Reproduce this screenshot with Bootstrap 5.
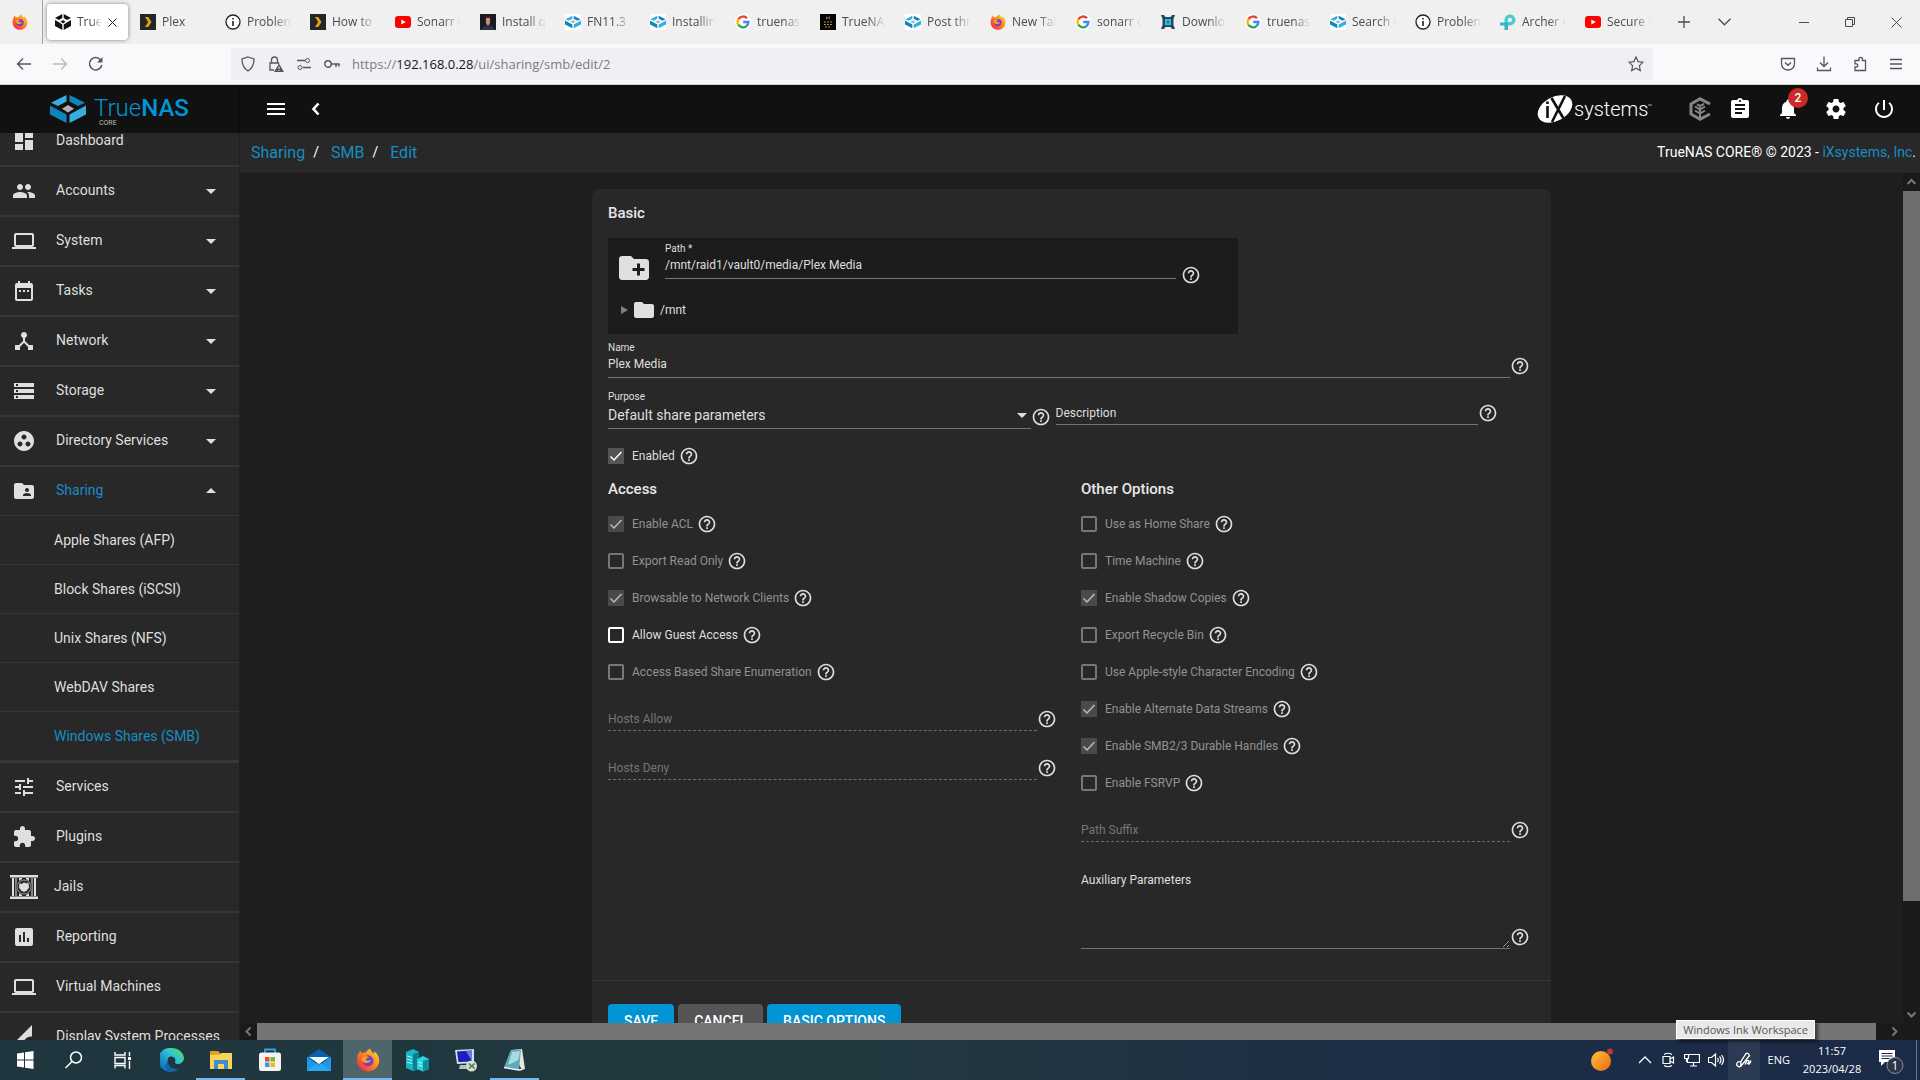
<!DOCTYPE html>
<html lang="en">
<head>
<meta charset="utf-8">
<meta name="viewport" content="width=device-width, initial-scale=1">
<title>TrueNAS - Sharing SMB Edit</title>
<link href="https://cdn.jsdelivr.net/npm/bootstrap@5.3.0/dist/css/bootstrap.min.css" rel="stylesheet">
<style>
  :root { --blue: #0095d5; --link: #1a8cc4; --fg: #dfdfdf; --bg1: #1e1e1e; --bg2: #282828; --seg: "Open Sans", "Noto Sans", sans-serif; }
  body { height: 100vh; overflow: hidden; font-family: Roboto, sans-serif; font-size: 14px; background: var(--bg1); color: var(--fg); }
  svg { display: block; flex: none; }
  a { text-decoration: none; color: inherit; }
  .plain { background: none; border: 0; padding: 0; color: inherit; display: flex; }
  .i24 { width: 24px; height: 24px; fill: currentColor; }
  .i20 { width: 20px; height: 20px; fill: currentColor; }
  .i16 { width: 16px; height: 16px; }
  .ln { fill: none; stroke: currentColor; }

  .tabstrip { height: 44px; background: #f0f0f0; color: #4a4a52; font: 12px/16px var(--seg); }
  .pinned { width: 43px; padding-left: 12px; border-right: 1px solid #a5a5a8; }
  .btab { width: 85px; padding-left: 8px; gap: 6px; flex: none; }
  .btab .ttl { width: 44px; overflow: hidden; white-space: nowrap; -webkit-mask-image: linear-gradient(90deg, #000 60%, transparent); mask-image: linear-gradient(90deg, #000 60%, transparent); }
  .btab.current { width: 81px; height: 36px; margin: 0 4px; background: #fff; border-radius: 4px; box-shadow: 0 0 4px rgba(0,0,0,.45); }
  .btab.current .ttl { width: 25px; }
  .winbtns { gap: 36px; padding-right: 18px; }
  .toolbar { height: 41px; background: #f9f9fb; border-bottom: 1px solid #cdd2cd; color: #55555e; padding: 0 16px; }
  .toolbar .grp { gap: 20px; }
  .urlbar { height: 32px; background: #f0f0f4; border-radius: 4px; padding: 0 9px; margin: 0 127px; gap: 12px; }
  .urlbar .addr { font: 13px/20px var(--seg); color: #7b7b84; }
  .urlbar .addr b { font-weight: 400; color: #15141a; }

  .apphead { height: 48px; background: #111; color: #fff; padding-right: 24px; }
  .brand { width: 240px; padding-left: 50px; gap: 8px; border-right: 1px solid #0c0c0c; }
  .brand .word { font-size: 24px; line-height: 24px; font-weight: 300; color: var(--blue); }
  .brand .word b { font-weight: 500; }
  .brand .core { font-size: 7px; line-height: 7px; color: #bbb; padding-left: 5px; }
  .headicons { gap: 24px; }
  .headicons .tight { margin-left: -8px; }
  .alerts { width: 20px; height: 20px; border-radius: 50%; background: #ce2929; color: #fff; font-size: 12px; line-height: 20px; font-weight: 500; top: -9px; left: 12px; text-align: center; }

  .workarea, .pane { min-height: 0; }
  .growcol { min-width: 0; }
  .side { width: 240px; background: var(--bg2); border-right: 1px solid #212121; overflow: hidden; }
  .side .menu { margin: -16px 0 0; padding: 0; list-style: none; flex: none; }
  .side .entry { height: 50px; border-bottom: 2px solid #373737; padding: 0 16px 0 12px; gap: 20px; }
  .side .entry.wide { padding-left: 10px; gap: 16px; }
  .side .entry .lbl { flex: 1; white-space: nowrap; padding-bottom: 1px; }
  .side .entry.open { height: 48px; border-bottom: 0; }
  .side .submenu { list-style: none; margin: 0; padding: 0; border-bottom: 3px solid #373737; }
  .side .submenu a { display: flex; align-items: center; height: 49px; padding-left: 54px; border-top: 1px solid #373737; }
  .hot { color: var(--link); }

  .crumbs { height: 40px; background: var(--bg2); font-size: 16px; padding: 0 4px 0 11px; border-bottom: 1px solid #242424; }
  .crumbs .sep { color: #fff; padding: 0 12px 0 8px; font-size: 14px; }
  .crumbs .copy { font-size: 14px; color: #fff; }

  .pane { overflow: hidden; padding: 16px; }
  .sheet { width: 100%; max-width: 959px; flex: none; margin: 0 auto; background: var(--bg2); border-radius: 8px; align-self: flex-start; }
  .sheet .inner { padding: 16px 21px 31px 16px; }
  .sheet h2 { font-size: 15px; line-height: 17px; font-weight: 500; margin: 0 0 16px; color: #e8e8e8; }
  .explorer { max-width: 630px; height: 96px; background: #1c1c1c; margin-bottom: 8px; }
  .explorer .top { padding: 5px 37px 0 8px; }
  .explorer .top .newdir { margin-bottom: -7px; }
  .explorer .top .fieldbox { margin-left: 13px; }
  .explorer .qm { margin: 0 0 -6px 5px; }
  .explorer .tree { gap: 4px; padding: 19px 0 0 13px; font-size: 12px; line-height: 24px; }
  .fieldbox { flex: 1; min-width: 0; display: flex; flex-direction: column; }
  .fieldbox label { font-size: 10px; line-height: 12px; margin-bottom: 2px; }
  .mi { height: 20px; padding: 0 0 3px; border: 0; border-bottom: 1px solid #757575; border-radius: 0; background: transparent; color: var(--fg); font-size: 12px; line-height: 16px; outline: 0; width: 100%; flex: 1; min-width: 0; }
  .fieldbox .mi { height: 22px; padding-bottom: 5px; flex: none; }
  .mi::placeholder { color: var(--fg); opacity: 1; }
  .mi:disabled { border-bottom: 1px dashed #6c6c6c; }
  .mi:disabled::placeholder { color: #757575; }
  textarea.mi { height: 77px; resize: vertical; }
  .line { display: flex; align-items: flex-end; }
  .line > .qm { margin-bottom: 2px; }
  .half { width: 48%; }
  .pair { gap: 5px; margin-top: 13px; }
  .pair + .tick { margin-top: 17px; }
  .fieldbox select.mi { font-size: 14px; height: 24px; padding: 1px 0 4px; line-height: 18px; appearance: none; background: url("data:image/svg+xml,%3Csvg xmlns='http://www.w3.org/2000/svg' viewBox='0 0 10 5'%3E%3Cpath fill='%23ddd' d='M0 0h10L5 5z'/%3E%3C/svg%3E") no-repeat right 4px top 8px / 10px 5px; }
  .qm { color: #dedede; }
  .tick { display: flex; align-items: center; height: 20px; gap: 4px; color: var(--fg); font-size: 12px; }
  .tick label { margin-left: 4px; }
  .tick .form-check-input { width: 16px; height: 16px; margin: 0; border: 2px solid #fff; border-radius: 2px; background: transparent; box-shadow: none; flex: none; }
  .tick .form-check-input:checked { border: 0; border-radius: 0; background: #555 url("data:image/svg+xml,%3Csvg xmlns='http://www.w3.org/2000/svg' viewBox='0 0 16 16'%3E%3Cpath fill='none' stroke='%23fff' stroke-width='1.5' d='M2.500 8.500l3.500 3.500 7.500-8'/%3E%3C/svg%3E") center / 16px; }
  .tick.off label { color: #929292; opacity: 1; }
  .tick.off .form-check-input { opacity: 1; border-color: #777; }
  .tick.off .form-check-input:checked { background-color: #4a4a4a; background-image: url("data:image/svg+xml,%3Csvg xmlns='http://www.w3.org/2000/svg' viewBox='0 0 16 16'%3E%3Cpath fill='none' stroke='%23bbb' stroke-width='1.5' d='M2.500 8.500l3.500 3.500 7.500-8'/%3E%3C/svg%3E"); }
  .duo { display: grid; grid-template-columns: 1fr 1fr; gap: 24px; margin-top: 15px; }
  .ticks { display: flex; flex-direction: column; gap: 17px; }
  .duo .line { margin-top: 27px; }
  .duo .line.tall { margin-top: 30px; }
  .actions { border-top: 1px solid #343434; padding: 23px 16px 16px; gap: 4px; }
  .actions .btn { height: 34px; padding: 0 16px; font-size: 14px; font-weight: 500; line-height: 34px; border: 0; border-radius: 4px; color: #fff; background: var(--blue); }
  .actions .btn.grey { background: #555; }

  .vbar { width: 17px; background: #1a1a1c; color: #77777a; }
  .hbar { height: 17px; background: #1a1a1c; color: #77777a; }
  .arr { width: 17px; height: 17px; flex: none; fill: none; stroke: currentColor; stroke-width: 2; }
  .vbar .thumb { height: 87%; background: #6e6e70; margin-top: 1px; }
  .hbar .thumb { width: calc(100% - 10px); height: 17px; background: #757577; }

  .taskbar { height: 40px; background: linear-gradient(90deg, #20363e, #22383f 45%, #1c2d45 75%, #1a2a48); color: #fff; font: 11px/18px var(--seg); }
  .tb { width: 49px; height: 40px; display: flex; align-items: center; justify-content: center; background: none; border: 0; padding: 0; color: #fff; border-bottom: 2px solid transparent; }
  .tb.run { border-bottom-color: #76b9ed; }
  .tb.focused { background: #4f656c; border-bottom-color: #76b9ed; }
  .tb svg { width: 24px; height: 24px; margin-top: 2px; }
  .tray { gap: 8px; padding-right: 3px; }
  .tray .weather { margin-right: 17px; }
  .tray .pen { width: 32px; height: 40px; margin-left: -4px; background: #2c3b54; display: flex; align-items: center; justify-content: center; }
  .tray .note { margin: 0 2px; }
  .tray .edge { height: 40px; }
  .clock { width: 68px; text-align: center; }
  .tip { position: absolute; right: 105px; bottom: 41px; height: 19px; padding: 0 6px; font: 11px/17px var(--seg); color: #555; background: #e9e9e9; border: 1px solid #fff; box-shadow: 3px 3px 3px rgba(0,0,0,.5); white-space: nowrap; }
</style>
<script src="https://cdn.jsdelivr.net/npm/bootstrap@5.3.0/dist/js/bootstrap.bundle.min.js"></script>
</head>
<body class="d-flex flex-column">

<svg width="0" height="0" class="position-absolute" aria-hidden="true">
  <defs>
    <linearGradient id="gff" x1="1" y1="0" x2="0" y2="1"><stop offset="0" stop-color="#ffe036"/><stop offset=".45" stop-color="#ff8a1e"/><stop offset="1" stop-color="#f0164f"/></linearGradient>
    <linearGradient id="ged" x1="1" y1="0" x2="0" y2="1"><stop offset="0" stop-color="#5fe04a"/><stop offset=".4" stop-color="#2cc3d8"/><stop offset="1" stop-color="#0a55b0"/></linearGradient>
    <linearGradient id="gor" x1="0" y1="0" x2="1" y2="1"><stop offset="0" stop-color="#ffc13a"/><stop offset="1" stop-color="#ea6a10"/></linearGradient>
  </defs>
  <symbol id="firefox" viewBox="0 0 16 16"><path fill="url(#gff)" d="M1.300 4.200C2 3.200 2.400 2.600 2.600 1.600c.7.600 1 1.200 1.200 1.900C4.800 3 5.700 3 6.300 3.200 7 1.900 8.200 1 9.700.3c-.1 1.400.7 2.200 1.900 3.200.5-.2.700-.7.600-1.300 2 1.400 3.300 3.600 3.300 6.200 0 4.200-3.300 7.300-7.500 7.300S.6 12.500.6 8.400c0-1.600.2-3.100.7-4.200z"/><circle cx="8" cy="8.600" r="3.700" fill="#7542c4"/><path fill="#ff9a2a" d="M4 6.600c1.700-1.700 3.900-1.300 4.800-.3-1.500 0-2.200.6-2 1.500.3 1 2.100.6 3.200.1-.3 2.600-4.300 2.800-6 .8z"/></symbol>
  <symbol id="cube" viewBox="0 0 36 28"><path fill="#35aee0" d="M16.500 0v6.500L8 11 1 7.800z"/><path fill="#0c86bd" d="M19.500 0v6.500L28 11l7-3.200z"/><path fill="#0c86bd" d="M0 10.500l16.500 9V28L0 19.500z"/><path fill="#35aee0" d="M36 10.500l-16.500 9V28L36 19.500z"/><path fill="#b2b2b2" d="M18 10l6 3.700-6 3.700-6-3.700z"/></symbol>
  <symbol id="plex" viewBox="0 0 16 16"><path fill="#232629" d="M0 0h16v16H0z"/><path fill="#e5a00d" d="M5 3h3.300L11.500 8l-3.200 5H5l3.200-5z"/></symbol>
  <symbol id="info" viewBox="0 0 16 16"><circle cx="8" cy="8" r="7" fill="#fff" stroke="#222" stroke-width="1.300"/><path stroke="#222" stroke-width="1.600" d="M8 7v5M8 4v1.600"/></symbol>
  <symbol id="yt" viewBox="0 0 16 16"><rect y="2" width="16" height="12" rx="3" fill="#f00"/><path fill="#fff" d="M6.300 5.500v5L10.800 8z"/></symbol>
  <symbol id="tn" viewBox="0 0 16 16"><path fill="#fff" d="M0 0h16v16H0z"/><use href="#cube" x="0" y="1.800" width="16" height="12.400"/></symbol>
  <symbol id="goog" viewBox="0 0 16 16"><circle cx="8" cy="8" r="8" fill="#fff"/><g fill="none" stroke-width="2.400"><path stroke="#ea4335" d="M3.300 5.300A5.400 5.400 0 0 1 12 4.300"/><path stroke="#fbbc05" d="M3.300 5.300a5.400 5.400 0 0 0 0 5.400"/><path stroke="#34a853" d="M3.300 10.700a5.400 5.400 0 0 0 8 1.500"/><path stroke="#4285f4" d="M11.300 12.200A5.400 5.400 0 0 0 13.400 8H8.200"/></g></symbol>
  <symbol id="q" viewBox="0 0 24 24"><path d="M11 18h2v-2h-2v2zm1-16C6.480 2 2 6.480 2 12s4.480 10 10 10 10-4.480 10-10S17.520 2 12 2zm0 18c-4.410 0-8-3.590-8-8s3.590-8 8-8 8 3.590 8 8-3.590 8-8 8zm0-14c-2.210 0-4 1.790-4 4h2c0-1.100.9-2 2-2s2 .9 2 2c0 2-3 1.750-3 5h2c0-2.250 3-2.500 3-5 0-2.210-1.790-4-4-4z"/></symbol>
  <symbol id="dn" viewBox="0 0 24 24"><path d="M7 10l5 5 5-5z"/></symbol>
  <symbol id="up" viewBox="0 0 24 24"><path d="M7 14l5-5 5 5z"/></symbol>
  <symbol id="laptop" viewBox="0 0 24 24"><path d="M20 18c1.100 0 1.990-.9 1.990-2L22 6c0-1.100-.9-2-2-2H4c-1.100 0-2 .9-2 2v10c0 1.100.9 2 2 2H0v2h24v-2h-4zM4 6h16v10H4V6z"/></symbol>
</svg>

<header class="tabstrip d-flex align-items-center flex-shrink-0">
  <div class="pinned h-100 d-flex align-items-center"><svg class="i16"><use href="#firefox"/></svg></div>
  <div class="btab current d-flex align-items-center"><svg class="i16" viewBox="0 0 16 16"><path fill="#111" d="M7.300 0v4L4 6 0 4zM8.700 0v4L12 6l4-2zM0 6l3.500 2L7.300 10.500V16L0 12zM16 6l-3.500 2-3.800 2.500V16l7.300-4zM8 6l2.500 1.800L8 9.500 5.500 7.800z"/></svg><span class="ttl">TrueN</span><button class="plain" aria-label="Close tab"><svg width="9" height="9" viewBox="0 0 9 9" class="ln"><path stroke="#222" d="M.5.5l8 8M8.500.5l-8 8"/></svg></button></div>
  <div class="btab d-flex align-items-center"><svg class="i16"><use href="#plex"/></svg><span class="ttl">Plex</span></div>
  <div class="btab d-flex align-items-center"><svg class="i16"><use href="#info"/></svg><span class="ttl">Problem</span></div>
  <div class="btab d-flex align-items-center"><svg class="i16"><use href="#plex"/></svg><span class="ttl">How to</span></div>
  <div class="btab d-flex align-items-center"><svg class="i16"><use href="#yt"/></svg><span class="ttl">Sonarr G</span></div>
  <div class="btab d-flex align-items-center"><svg class="i16" viewBox="0 0 16 16"><path fill="#191a22" d="M0 0h16v16H0z"/><path fill="#c98d76" d="M6 3h4v6l-1 2H7L6 9z"/><path fill="#3a2020" d="M5 2h6v2H6v5H5z"/><path fill="#2b3348" d="M2 14l5-3h3l4 3v2H2z"/></svg><span class="ttl">Install qb</span></div>
  <div class="btab d-flex align-items-center"><svg class="i16"><use href="#tn"/></svg><span class="ttl">FN11.3 i</span></div>
  <div class="btab d-flex align-items-center"><svg class="i16"><use href="#tn"/></svg><span class="ttl">Installin</span></div>
  <div class="btab d-flex align-items-center"><svg class="i16"><use href="#goog"/></svg><span class="ttl">truenas</span></div>
  <div class="btab d-flex align-items-center"><svg class="i16" viewBox="0 0 16 16"><path fill="#050505" d="M0 0h16v16H0z"/><path stroke="#b08d4a" fill="none" d="M6 3l4 2M10 2.500L6 5M4 8h8M4 10.500h8M5 13h6" stroke-dasharray="2 1"/></svg><span class="ttl">TrueNAS</span></div>
  <div class="btab d-flex align-items-center"><svg class="i16"><use href="#tn"/></svg><span class="ttl">Post thr</span></div>
  <div class="btab d-flex align-items-center"><svg class="i16"><use href="#firefox"/></svg><span class="ttl">New Tab</span></div>
  <div class="btab d-flex align-items-center"><svg class="i16"><use href="#goog"/></svg><span class="ttl">sonarr d</span></div>
  <div class="btab d-flex align-items-center"><svg class="i16" viewBox="0 0 16 16"><path fill="#24485f" d="M1 1h3l1.500 2h5L12 1h3l-1.500 4v6L15 15h-3l-1.500-2h-5L4 15H1l1.500-4V5z"/><path fill="#35b9e6" d="M5 5h6v6H5z"/><path fill="#1c6f97" d="M7 6.500h2v3H7z"/></svg><span class="ttl">Downlo</span></div>
  <div class="btab d-flex align-items-center"><svg class="i16"><use href="#goog"/></svg><span class="ttl">truenas</span></div>
  <div class="btab d-flex align-items-center"><svg class="i16"><use href="#tn"/></svg><span class="ttl">Search r</span></div>
  <div class="btab d-flex align-items-center"><svg class="i16"><use href="#info"/></svg><span class="ttl">Problem</span></div>
  <div class="btab d-flex align-items-center"><svg class="i16" viewBox="0 0 16 16"><path fill="none" stroke="#4accd3" stroke-width="3.400" d="M6.200 11V5.500a3.800 3.800 0 1 1 3.800 4.200H8"/><path fill="#35b5bd" d="M0 8.500h8v3H0zM4.500 11H8v5H4.500z"/></svg><span class="ttl">Archer C</span></div>
  <div class="btab d-flex align-items-center"><svg class="i16"><use href="#yt"/></svg><span class="ttl">Secure H</span></div>
  <button class="plain ms-3" aria-label="New tab"><svg width="12" height="12" class="ln" viewBox="0 0 12 12"><path stroke-width="1.300" d="M6 0v12M0 6h12"/></svg></button>
  <button class="plain ms-4 ps-1" aria-label="List tabs"><svg width="13" height="8" class="ln" viewBox="0 0 13 8"><path stroke-width="1.300" d="M.5.800l6 6 6-6"/></svg></button>
  <div class="winbtns ms-auto d-flex align-items-center">
    <button class="plain" aria-label="Minimize"><svg width="10" height="10" class="ln" viewBox="0 0 10 10"><path d="M0 5.500h10"/></svg></button>
    <button class="plain" aria-label="Restore"><svg width="10" height="10" class="ln" viewBox="0 0 10 10"><path d="M.5 2.500h7v7h-7zM2.500 2.500v-2h7v7h-2"/></svg></button>
    <button class="plain" aria-label="Close window"><svg width="11" height="11" class="ln" viewBox="0 0 11 11"><path d="M.5.500l10 10M10.500.500l-10 10"/></svg></button>
  </div>
</header>

<div class="toolbar d-flex align-items-center flex-shrink-0">
  <div class="grp d-flex">
    <button class="plain" aria-label="Back"><svg class="i16 ln" viewBox="0 0 16 16"><path stroke-width="1.400" d="M15 8H1.500M7 2.500L1.500 8 7 13.500"/></svg></button>
    <button class="plain" aria-label="Forward"><svg class="i16 ln" viewBox="0 0 16 16"><path stroke="#b9b9bd" stroke-width="1.400" d="M1 8h13.500M9 2.500L14.500 8 9 13.500"/></svg></button>
    <button class="plain" aria-label="Reload"><svg class="i16 ln" viewBox="0 0 16 16"><path stroke-width="1.500" d="M13.800 9A6.200 6.200 0 1 1 12.500 3.800"/><path fill="currentColor" stroke="none" d="M14.500 1v5.500H9z"/></svg></button>
  </div>
  <div class="urlbar d-flex align-items-center flex-grow-1">
    <svg class="i16 ln" viewBox="0 0 16 16"><path stroke-width="1.300" d="M8 1l6 2c0 5-1 9-6 12-5-3-6-7-6-12z"/></svg>
    <svg class="i16 ln" viewBox="0 0 16 16"><path stroke-width="1.300" d="M3.500 7V4a3 3 0 0 1 6 0v3M6 14H2V7h8.500v1"/><path fill="currentColor" stroke="none" d="M11 7.500L16 16H6z"/><path stroke="#f0f0f4" d="M11 10.500v2.500M11 14v1"/></svg>
    <svg class="i16 ln" viewBox="0 0 16 16"><path stroke-width="1.400" d="M1 4.500h8M7 11.500h8"/><circle cx="11.500" cy="4.500" r="2"/><circle cx="4" cy="11.500" r="2"/></svg>
    <svg class="i16 ln" viewBox="0 0 16 16"><circle cx="4" cy="8" r="3.200" stroke-width="1.400"/><path stroke-width="1.500" d="M7 8h8.500M12 8v3M15 8v2.500"/></svg>
    <span class="addr flex-grow-1">https://<b>192.168.0.28</b>/ui/sharing/smb/edit/2</span>
    <button class="plain" aria-label="Bookmark"><svg class="i16 ln" viewBox="0 0 16 16"><path stroke-width="1.200" d="M8 1l2.100 4.600 4.900.600-3.600 3.400.900 5L8 12.200l-4.300 2.400.900-5L1 6.200l4.900-.600z"/></svg></button>
  </div>
  <div class="grp d-flex">
    <button class="plain" aria-label="Pocket"><svg class="i16 ln" viewBox="0 0 16 16"><path stroke-width="1.300" d="M1.500 2.500h13V8a6.500 6 0 0 1-13 0zM5 6.500L8 9.300l3-2.800"/></svg></button>
    <button class="plain" aria-label="Downloads"><svg class="i16 ln" viewBox="0 0 16 16"><path stroke-width="1.300" d="M8 .5v10M4 6.500l4 4 4-4M1.500 11.500v3h13v-3"/></svg></button>
    <button class="plain" aria-label="Extensions"><svg class="i16 ln" viewBox="0 0 16 16"><path stroke-width="1.300" d="M3 4.500h4V3a1.700 1.700 0 0 1 3.400 0v1.500h3.100v10H3V11h1.200a1.500 1.500 0 0 0 0-3.200H3z"/></svg></button>
    <button class="plain" aria-label="Application menu"><svg class="i16 ln" viewBox="0 0 16 16"><path stroke-width="1.300" d="M2 3.500h12M2 8h12M2 12.500h12"/></svg></button>
  </div>
</div>

<div class="apphead d-flex align-items-center flex-shrink-0">
  <a href="#" class="brand h-100 d-flex align-items-center">
    <svg width="36" height="28"><use href="#cube"/></svg>
    <span class="d-flex flex-column pt-1"><span class="word">True<b>NAS</b></span><span class="core">CORE</span></span>
  </a>
  <button class="plain ms-4" aria-label="Toggle menu"><svg class="i24" viewBox="0 0 24 24"><path d="M3 18h18v-2H3v2zm0-5h18v-2H3v2zm0-7v2h18V6H3z"/></svg></button>
  <button class="plain ms-3" aria-label="Collapse"><svg class="i24 ln" viewBox="0 0 24 24"><path fill="none" stroke="#fff" stroke-width="2.600" d="M14.500 6.500L9.500 12l5 5.500"/></svg></button>
  <a href="#" class="ms-auto me-3 pe-3" aria-label="iXsystems"><svg width="120" height="32" viewBox="0 0 120 32"><ellipse cx="19" cy="16" rx="18.500" ry="12" transform="rotate(-28 19 16)" fill="#fff"/><path stroke="#111" stroke-width="2.600" fill="none" d="M11.500 13v12M11.500 8.500v2.500M15.500 5L29 28M29 3L16 29"/><text x="38" y="23" fill="#fff" font-family="Roboto" font-weight="300" font-size="20">systems</text><path stroke="#aaa" d="M112 12h4"/></svg></a>
  <div class="headicons d-flex align-items-center">
    <a href="#" aria-label="TrueCommand"><svg class="i24" viewBox="0 0 24 24"><path fill="none" stroke="#858585" stroke-width="3" d="M22 7L12 1.800 3 7v10l9 5.200L22 17"/><path fill="none" stroke="#858585" stroke-width="2" d="M12 9v12M7 9.500l5 3 5-3M7 13.500l5 3 5-3M9 7.500l3 1.500 4-2"/></svg></a>
    <button class="plain tight" aria-label="Tasks"><svg class="i24" viewBox="0 0 24 24"><path d="M19 3h-4.180C14.400 1.840 13.300 1 12 1c-1.300 0-2.400.84-2.820 2H5c-1.100 0-2 .9-2 2v14c0 1.100.9 2 2 2h14c1.100 0 2-.9 2-2V5c0-1.100-.9-2-2-2zm-7 0c.55 0 1 .45 1 1s-.45 1-1 1-1-.45-1-1 .45-1 1-1zm2 14H7v-2h7v2zm3-4H7v-2h10v2zm0-4H7V7h10v2z"/></svg></button>
    <button class="plain position-relative" aria-label="Alerts"><svg class="i24" viewBox="0 0 24 24"><path d="M12 22c1.100 0 2-.9 2-2h-4c0 1.100.89 2 2 2zm6-6v-5c0-3.070-1.640-5.640-4.500-6.320V4c0-.83-.67-1.500-1.500-1.500s-1.500.67-1.500 1.500v.68C7.630 5.360 6 7.920 6 11v5l-2 2v1h16v-1l-2-2z"/></svg><span class="alerts position-absolute">2</span></button>
    <button class="plain" aria-label="Settings"><svg class="i24" viewBox="0 0 24 24"><path d="M19.430 12.980c.04-.32.07-.64.07-.98s-.03-.66-.07-.98l2.110-1.650c.19-.15.24-.42.12-.64l-2-3.460c-.12-.22-.39-.3-.61-.22l-2.490 1c-.52-.4-1.080-.73-1.690-.98l-.38-2.650C14.460 2.180 14.250 2 14 2h-4c-.25 0-.46.18-.49.42l-.38 2.650c-.61.25-1.170.59-1.690.98l-2.490-1c-.23-.09-.49 0-.61.22l-2 3.460c-.13.22-.07.49.12.64l2.110 1.650c-.04.32-.07.65-.07.98s.03.66.07.98l-2.110 1.650c-.19.15-.24.42-.12.64l2 3.460c.12.22.39.3.61.22l2.490-1c.52.4 1.080.73 1.690.98l.38 2.650c.03.24.24.42.49.42h4c.25 0 .46-.18.49-.42l.38-2.650c.61-.25 1.170-.59 1.690-.98l2.490 1c.23.09.49 0 .61-.22l2-3.460c.12-.22.07-.49-.12-.64l-2.110-1.650zM12 15.500c-1.930 0-3.500-1.570-3.500-3.500s1.570-3.500 3.500-3.500 3.500 1.570 3.500 3.500-1.570 3.500-3.500 3.500z"/></svg></button>
    <button class="plain" aria-label="Power"><svg class="i24" viewBox="0 0 24 24"><path d="M13 3h-2v10h2V3zm4.830 2.170l-1.420 1.420C17.990 7.860 19 9.810 19 12c0 3.870-3.130 7-7 7s-7-3.130-7-7c0-2.190 1.010-4.140 2.580-5.420L6.170 5.170C4.230 6.820 3 9.260 3 12c0 4.970 4.030 9 9 9s9-4.030 9-9c0-2.740-1.230-5.180-3.170-6.830z"/></svg></button>
  </div>
</div>

<div class="workarea d-flex flex-grow-1">
  <nav class="side d-flex flex-column flex-shrink-0" aria-label="Main">
    <ul class="menu">
      <li><a href="#" class="entry d-flex align-items-center"><svg class="i24" viewBox="0 0 24 24"><path d="M3 13h8V3H3v10zm0 8h8v-6H3v6zm10 0h8V11h-8v10zm0-18v6h8V3h-8z"/></svg><span class="lbl">Dashboard</span></a></li>
      <li><a href="#" class="entry d-flex align-items-center"><svg class="i24" viewBox="0 0 24 24"><path d="M16 11c1.660 0 2.990-1.340 2.990-3S17.660 5 16 5c-1.660 0-3 1.340-3 3s1.340 3 3 3zm-8 0c1.660 0 2.990-1.340 2.990-3S9.660 5 8 5C6.340 5 5 6.340 5 8s1.340 3 3 3zm0 2c-2.330 0-7 1.170-7 3.500V19h14v-2.500c0-2.330-4.670-3.500-7-3.500zm8 0c-.29 0-.62.02-.97.05 1.160.84 1.970 1.970 1.970 3.450V19h6v-2.500c0-2.330-4.670-3.500-7-3.500z"/></svg><span class="lbl">Accounts</span><svg class="i24"><use href="#dn"/></svg></a></li>
      <li><a href="#" class="entry d-flex align-items-center"><svg class="i24"><use href="#laptop"/></svg><span class="lbl">System</span><svg class="i24"><use href="#dn"/></svg></a></li>
      <li><a href="#" class="entry d-flex align-items-center"><svg class="i24" viewBox="0 0 24 24"><path d="M9 11H7v2h2v-2zm4 0h-2v2h2v-2zm4 0h-2v2h2v-2zm2-7h-1V2h-2v2H8V2H6v2H5c-1.110 0-1.990.9-1.990 2L3 20c0 1.100.89 2 2 2h14c1.100 0 2-.9 2-2V6c0-1.100-.9-2-2-2zm0 16H5V9h14v11z"/></svg><span class="lbl">Tasks</span><svg class="i24"><use href="#dn"/></svg></a></li>
      <li><a href="#" class="entry d-flex align-items-center"><svg class="i24" viewBox="0 0 24 24"><path d="M17 16l-4-4V8.820C14.160 8.400 15 7.300 15 6c0-1.660-1.340-3-3-3S9 4.340 9 6c0 1.300.84 2.400 2 2.820V12l-4 4H3v5h5v-3.050l4-4.200 4 4.200V21h5v-5h-4z"/></svg><span class="lbl">Network</span><svg class="i24"><use href="#dn"/></svg></a></li>
      <li><a href="#" class="entry d-flex align-items-center"><svg class="i24" viewBox="0 0 24 24"><path d="M2 20h20v-4H2v4zm2-3h2v2H4v-2zM2 4v4h20V4H2zm4 3H4V5h2v2zm-4 7h20v-4H2v4zm2-3h2v2H4v-2z"/></svg><span class="lbl">Storage</span><svg class="i24"><use href="#dn"/></svg></a></li>
      <li><a href="#" class="entry d-flex align-items-center"><svg class="i24" viewBox="0 0 24 24"><path d="M12 2C6.480 2 2 6.480 2 12s4.480 10 10 10 10-4.480 10-10S17.520 2 12 2zM8 17.500c-1.380 0-2.500-1.120-2.500-2.500s1.120-2.500 2.500-2.500 2.500 1.120 2.500 2.500-1.120 2.500-2.500 2.500zM9.500 8c0-1.380 1.120-2.500 2.500-2.500s2.500 1.120 2.500 2.500-1.120 2.500-2.500 2.500S9.500 9.380 9.500 8zm6.500 9.500c-1.380 0-2.500-1.120-2.500-2.500s1.120-2.500 2.500-2.500 2.500 1.120 2.500 2.500-1.120 2.500-2.500 2.500z"/></svg><span class="lbl">Directory Services</span><svg class="i24"><use href="#dn"/></svg></a></li>
      <li><a href="#" class="entry open d-flex align-items-center"><svg class="i24" viewBox="0 0 24 24"><path d="M20 6h-8l-2-2H4c-1.100 0-1.990.9-1.990 2L2 18c0 1.100.9 2 2 2h16c1.100 0 2-.9 2-2V8c0-1.100-.9-2-2-2zm-5 3c1.100 0 2 .9 2 2s-.9 2-2 2-2-.9-2-2 .9-2 2-2zm4 8h-8v-1c0-1.330 2.670-2 4-2s4 .67 4 2v1z"/></svg><span class="lbl hot">Sharing</span><svg class="i24"><use href="#up"/></svg></a>
        <ul class="submenu">
          <li><a href="#">Apple Shares (AFP)</a></li>
          <li><a href="#">Block Shares (iSCSI)</a></li>
          <li><a href="#">Unix Shares (NFS)</a></li>
          <li><a href="#">WebDAV Shares</a></li>
          <li><a href="#" class="hot">Windows Shares (SMB)</a></li>
        </ul>
      </li>
      <li><a href="#" class="entry d-flex align-items-center"><svg class="i24" viewBox="0 0 24 24"><path d="M3 17v2h6v-2H3zM3 5v2h10V5H3zm10 16v-2h8v-2h-8v-2h-2v6h2zM7 9v2H3v2h4v2h2V9H7zm14 4v-2H11v2h10zm-6-4h2V7h4V5h-4V3h-2v6z"/></svg><span class="lbl">Services</span></a></li>
      <li><a href="#" class="entry d-flex align-items-center"><svg class="i24" viewBox="0 0 24 24"><path d="M20.500 11H19V7c0-1.100-.9-2-2-2h-4V3.500C13 2.120 11.880 1 10.500 1S8 2.120 8 3.500V5H4c-1.100 0-1.990.9-1.990 2v3.800H3.500c1.490 0 2.700 1.210 2.700 2.700s-1.210 2.700-2.700 2.700H2V20c0 1.100.9 2 2 2h3.800v-1.500c0-1.490 1.210-2.700 2.700-2.700 1.490 0 2.700 1.210 2.700 2.700V22H17c1.100 0 2-.9 2-2v-4h1.500c1.380 0 2.500-1.120 2.500-2.500S21.880 11 20.500 11z"/></svg><span class="lbl">Plugins</span></a></li>
      <li><a href="#" class="entry wide d-flex align-items-center"><svg width="28" height="24" viewBox="0 0 28 24" fill="#dfdfdf"><path d="M0 0h28v2.500H0zM0 21.500h28V24H0zM2 3h2v18H2zM5.500 3h1v18h-1zM9 3h3v18H9zM16 3h3v18h-3zM21.500 3h1v18h-1zM24 3h2v18h-2z"/><circle cx="14" cy="12" r="8" fill="#282828"/><circle cx="14" cy="12" r="7" fill="none" stroke="#999"/><path d="M9.500 8l2 1L14 7.500l3 1 1.500-1 .5 5-2 3-3 1.500-3-1.500-2-3z"/></svg><span class="lbl">Jails</span></a></li>
      <li><a href="#" class="entry d-flex align-items-center"><svg class="i24" viewBox="0 0 24 24"><path d="M19 3H5c-1.100 0-2 .9-2 2v14c0 1.100.9 2 2 2h14c1.100 0 2-.9 2-2V5c0-1.100-.9-2-2-2zM9 17H7v-7h2v7zm4 0h-2V7h2v10zm4 0h-2v-4h2v4z"/></svg><span class="lbl">Reporting</span></a></li>
      <li><a href="#" class="entry d-flex align-items-center"><svg class="i24"><use href="#laptop"/></svg><span class="lbl">Virtual Machines</span></a></li>
      <li><a href="#" class="entry d-flex align-items-center"><svg class="i24" viewBox="0 0 24 24"><path d="M18.990 11.500c.34 0 .67.03 1 .07L20 0 0 20h11.560c-.04-.33-.07-.66-.07-1 0-4.140 3.360-7.500 7.500-7.500z"/><circle cx="19" cy="19" r="3.600"/></svg><span class="lbl">Display System Processes</span></a></li>
    </ul>
  </nav>

  <div class="growcol d-flex flex-column flex-grow-1">
    <div class="crumbs d-flex align-items-center flex-shrink-0">
      <a href="#" class="hot">Sharing</a><span class="sep">/</span><a href="#" class="hot">SMB</a><span class="sep">/</span><a href="#" class="hot">Edit</a>
      <span class="copy ms-auto">TrueNAS CORE® © 2023 - <a href="#" class="hot">iXsystems, Inc</a>.</span>
    </div>

    <div class="workarea d-flex flex-grow-1">
      <div class="growcol d-flex flex-column flex-grow-1">
        <main class="pane d-flex flex-grow-1">
          <form class="sheet">
            <div class="inner">
              <h2>Basic</h2>
              <div class="explorer">
                <div class="top d-flex align-items-end">
                  <svg class="newdir" width="36" height="36" viewBox="0 0 24 24" fill="#dfdfdf"><path d="M20 6h-8l-2-2H4c-1.110 0-1.990.89-1.990 2L2 18c0 1.110.89 2 2 2h16c1.110 0 2-.89 2-2V8c0-1.110-.89-2-2-2zm-1 8h-3v3h-2v-3h-3v-2h3V9h2v3h3v2z"/></svg>
                  <div class="fieldbox"><label for="path">Path *</label><input id="path" class="mi" value="/mnt/raid1/vault0/media/Plex Media"></div>
                  <svg class="i20 qm"><use href="#q"/></svg>
                </div>
                <div class="tree d-flex align-items-center"><svg width="7" height="8" viewBox="0 0 7 8" fill="#808080"><path d="M0 0l7 4-7 4z"/></svg><svg class="i24" viewBox="0 0 24 24"><path d="M10 4H4c-1.100 0-1.990.9-1.990 2L2 18c0 1.100.9 2 2 2h16c1.100 0 2-.9 2-2V8c0-1.100-.9-2-2-2h-8l-2-2z"/></svg><span>/mnt</span></div>
              </div>
              <div class="line"><div class="fieldbox"><label for="name">Name</label><input id="name" class="mi" value="Plex Media"></div><svg class="i20 qm"><use href="#q"/></svg></div>
              <div class="pair d-flex align-items-end">
                <div class="line half"><div class="fieldbox"><label for="purpose">Purpose</label><select id="purpose" class="mi"><option>Default share parameters</option></select></div><svg class="i20 qm"><use href="#q"/></svg></div>
                <div class="line half pb-1"><input class="mi" aria-label="Description" placeholder="Description"><svg class="i20 qm"><use href="#q"/></svg></div>
              </div>
              <div class="tick"><input type="checkbox" class="form-check-input" id="enabled" checked><label for="enabled">Enabled</label><svg class="i20 qm"><use href="#q"/></svg></div>
              <div class="duo">
                <section>
                  <h2>Access</h2>
                  <div class="ticks">
                    <div class="tick off"><input type="checkbox" class="form-check-input" id="acl" checked disabled><label for="acl">Enable ACL</label><svg class="i20 qm"><use href="#q"/></svg></div>
                    <div class="tick off"><input type="checkbox" class="form-check-input" id="ro" disabled><label for="ro">Export Read Only</label><svg class="i20 qm"><use href="#q"/></svg></div>
                    <div class="tick off"><input type="checkbox" class="form-check-input" id="browse" checked disabled><label for="browse">Browsable to Network Clients</label><svg class="i20 qm"><use href="#q"/></svg></div>
                    <div class="tick"><input type="checkbox" class="form-check-input" id="guest"><label for="guest">Allow Guest Access</label><svg class="i20 qm"><use href="#q"/></svg></div>
                    <div class="tick off"><input type="checkbox" class="form-check-input" id="abse" disabled><label for="abse">Access Based Share Enumeration</label><svg class="i20 qm"><use href="#q"/></svg></div>
                  </div>
                  <div class="line"><input class="mi" aria-label="Hosts Allow" placeholder="Hosts Allow" disabled><svg class="i20 qm"><use href="#q"/></svg></div>
                  <div class="line"><input class="mi" aria-label="Hosts Deny" placeholder="Hosts Deny" disabled><svg class="i20 qm"><use href="#q"/></svg></div>
                </section>
                <section>
                  <h2>Other Options</h2>
                  <div class="ticks">
                    <div class="tick off"><input type="checkbox" class="form-check-input" id="home" disabled><label for="home">Use as Home Share</label><svg class="i20 qm"><use href="#q"/></svg></div>
                    <div class="tick off"><input type="checkbox" class="form-check-input" id="tm" disabled><label for="tm">Time Machine</label><svg class="i20 qm"><use href="#q"/></svg></div>
                    <div class="tick off"><input type="checkbox" class="form-check-input" id="shadow" checked disabled><label for="shadow">Enable Shadow Copies</label><svg class="i20 qm"><use href="#q"/></svg></div>
                    <div class="tick off"><input type="checkbox" class="form-check-input" id="bin" disabled><label for="bin">Export Recycle Bin</label><svg class="i20 qm"><use href="#q"/></svg></div>
                    <div class="tick off"><input type="checkbox" class="form-check-input" id="apple" disabled><label for="apple">Use Apple-style Character Encoding</label><svg class="i20 qm"><use href="#q"/></svg></div>
                    <div class="tick off"><input type="checkbox" class="form-check-input" id="ads" checked disabled><label for="ads">Enable Alternate Data Streams</label><svg class="i20 qm"><use href="#q"/></svg></div>
                    <div class="tick off"><input type="checkbox" class="form-check-input" id="durable" checked disabled><label for="durable">Enable SMB2/3 Durable Handles</label><svg class="i20 qm"><use href="#q"/></svg></div>
                    <div class="tick off"><input type="checkbox" class="form-check-input" id="fsrvp" disabled><label for="fsrvp">Enable FSRVP</label><svg class="i20 qm"><use href="#q"/></svg></div>
                  </div>
                  <div class="line"><input class="mi" aria-label="Path Suffix" placeholder="Path Suffix" disabled><svg class="i20 qm"><use href="#q"/></svg></div>
                  <div class="line tall"><textarea class="mi" aria-label="Auxiliary Parameters" placeholder="Auxiliary Parameters"></textarea><svg class="i20 qm"><use href="#q"/></svg></div>
                </section>
              </div>
            </div>
            <div class="actions d-flex">
              <button type="submit" class="btn">SAVE</button>
              <button type="button" class="btn grey">CANCEL</button>
              <button type="button" class="btn">BASIC OPTIONS</button>
            </div>
          </form>
        </main>
        <div class="hbar d-flex flex-shrink-0">
          <svg class="arr" viewBox="0 0 17 17"><path d="M10.500 4.500l-4 4 4 4"/></svg>
          <div class="flex-grow-1"><div class="thumb"></div></div>
          <svg class="arr" viewBox="0 0 17 17"><path d="M6.500 4.500l4 4-4 4"/></svg>
        </div>
      </div>
      <div class="vbar d-flex flex-column flex-shrink-0">
        <svg class="arr" viewBox="0 0 17 17"><path d="M4.500 11l4-4 4 4"/></svg>
        <div class="flex-grow-1"><div class="thumb"></div></div>
        <svg class="arr" viewBox="0 0 17 17"><path d="M4.500 6.500l4 4 4-4"/></svg>
        <div class="arr"></div>
      </div>
    </div>
  </div>
</div>

<footer class="taskbar d-flex align-items-center flex-shrink-0">
  <button class="tb" aria-label="Start"><svg viewBox="0 0 24 24" fill="#fff"><path d="M4 5.500l7-1v7H4zM12 4.300L20.500 3v8.500H12zM4 12.500h7v7l-7-1zM12 12.500h8.500V21L12 19.700z"/></svg></button>
  <button class="tb" aria-label="Search"><svg viewBox="0 0 24 24" class="ln"><circle cx="14" cy="9.500" r="5.500" stroke-width="1.500"/><path stroke-width="1.500" d="M10 13.500L3.500 20"/></svg></button>
  <button class="tb" aria-label="Task view"><svg viewBox="0 0 24 24" class="ln"><path stroke-width="1.400" d="M4 4v3h10V4M4 9.500h10v6H4zM4 20.500v-3h10v3M18.500 4v4M18.500 13v8"/><path fill="#fff" stroke="none" d="M17 9h3v3h-3z"/></svg></button>
  <button class="tb" aria-label="Edge"><svg viewBox="0 0 24 24"><path fill="url(#ged)" d="M12 0a12 12 0 0 1 12 9.500c0 4-2.700 6.500-6 6.500-2.500 0-3.500-1-3-2 1.500-3-1-5.500-4-5.500-3.500 0-4 4-3 7 1.200 4 5 6.500 10 5.500A12 12 0 1 1 12 0z"/><path fill="#0b4f9e" opacity=".6" d="M8 13c0 5 4 9 11 7.500-3 3.500-8 4-11 2.500-4-3-4-8 0-10z"/></svg></button>
  <button class="tb run" aria-label="File Explorer"><svg viewBox="0 0 24 24"><path fill="#e0a11e" d="M1 3h8l2 2v4H1z"/><path fill="#fbd35b" d="M1 7l10-.5L12 5h11v16H1z"/><path fill="#3f8fc6" d="M5 21v-9h14v9h-4v-5H9v5z"/></svg></button>
  <button class="tb" aria-label="Store"><svg viewBox="0 0 24 24"><path fill="none" stroke="#35a3e0" stroke-width="1.800" d="M7 6V1.500h10V6"/><rect x="1" y="4.500" width="22" height="18.500" rx="2.500" fill="#f3f3f3"/><path fill="#e5502a" d="M7 9h4.500v4.500H7z"/><path fill="#7eb52d" d="M12.500 9H17v4.500h-4.500z"/><path fill="#2e9fe0" d="M7 14.500h4.500V19H7z"/><path fill="#f5b722" d="M12.500 14.500H17V19h-4.500z"/></svg></button>
  <button class="tb" aria-label="Mail"><svg viewBox="0 0 24 24"><path fill="#0a5fae" d="M0 9L12 1l12 8v3H0z"/><path fill="#1c98e8" d="M0 9l12 8 12-8v14H0z"/><path fill="#35b5f5" d="M0 23l12-9 12 9z" opacity=".5"/><path fill="#f3f9fd" d="M2 9h20l-10 7z"/></svg></button>
  <button class="tb focused" aria-label="Firefox"><svg><use href="#firefox"/></svg></button>
  <button class="tb" aria-label="Servers"><svg viewBox="0 0 24 24"><path fill="#16b6c4" d="M1 4l7-3 6 3v17l-6 2-7-3z"/><path fill="#0a7f8c" d="M8 6l6-2v17l-6 2z"/><path fill="#2cd2de" d="M12 11l6-3 6 3v10l-6 2.500-6-2.500z"/><path fill="#0e8e9a" d="M18 13l6-2v10l-6 2.500z"/><path stroke="#b4f5fa" d="M2 8l5 1.500M2 11l5 1.500M2 14l5 1.500M13.500 14l3.500 1.200M13.500 17l3.500 1.200" stroke-width="1.200"/></svg></button>
  <button class="tb" aria-label="Remote Desktop"><svg viewBox="0 0 24 24"><path fill="#d8dce4" d="M1 2l19-1v14L3 16z"/><path fill="#1920b8" d="M3 3.500L18 2.500v11L4.500 14z"/><path fill="#5f7be8" d="M12 3l6-.5v11z"/><path fill="#b9bec8" d="M6 17h9l2 4H5z"/><circle cx="17.500" cy="18" r="5.500" fill="#d6dccf"/><path stroke="#3b8a36" fill="none" stroke-width="1.500" d="M15 15.500l2.500 2.500-2.500 2.500M20.500 15.500L18 18l2.500 2.500"/></svg></button>
  <button class="tb run" aria-label="Notepad"><svg viewBox="0 0 24 24"><path fill="#e8e8e0" d="M8 2l11-1 3 20-3 1z"/><path fill="#5fa9b8" d="M7.500 2.500L18 1.500 16 22 1 19.500z"/><path fill="#a6dbe2" d="M9 4l8-1-1.500 9L5 17z"/><path stroke="#f5f5f5" d="M1 19.500L16 22l3-.5" stroke-width="1.500" fill="none"/></svg></button>

  <div class="tray ms-auto d-flex align-items-center">
    <svg width="22" height="24" viewBox="0 0 22 24" class="weather"><circle cx="10" cy="13" r="10" fill="url(#gor)"/><circle cx="19" cy="3.500" r="3" fill="#c4342b"/></svg>
    <svg width="14" height="16" viewBox="0 0 14 16" class="ln"><path stroke-width="1.300" d="M1 11l6-6 6 6"/></svg>
    <svg class="i16 ln" viewBox="0 0 16 16"><path stroke-width="1.200" d="M3 4.500h7v7H3zM10 7l3.500-2v6L10 9M4 2.500Q8 0 12 2.500M4 13.500q4 2.500 8 0"/></svg>
    <svg class="i16 ln" viewBox="0 0 16 16"><path stroke-width="1.200" d="M5 2.500h10.500v8H3.500V7M9.500 10.500v3M6 14h7M.500 2.500h4v4h-4zM2.500 7v3"/></svg>
    <svg class="i16 ln" viewBox="0 0 16 16"><path stroke-width="1.200" d="M.5 5.500h3l4-3.500v12l-4-3.500h-3zM9.500 6q1.500 2 0 4M11.500 4.500q3 3.500 0 7M13.500 3q4 5 0 10"/></svg>
    <button class="plain pen" aria-label="Windows Ink Workspace"><svg class="i16 ln" viewBox="0 0 16 16"><path stroke-width="1.300" d="M4.500 10a2.500 2.500 0 1 0 .5 4L13.500 3.500q-1-3-3.500-2L5 9.500 4.500 14M9 12.500q2-5 3.500-4t-1 3q2 2 3.500-3"/></svg></button>
    <span>ENG</span>
    <div class="clock">11:57<br>2023/04/28</div>
    <svg width="30" height="28" viewBox="0 0 30 28" class="note"><path fill="#fff" d="M3 4h16v12H9l-4 4v-4H3z"/><path stroke="#1b2b48" d="M5.500 7.500h11M5.500 10h11M5.500 12.500h8"/><circle cx="19" cy="19.500" r="8" fill="#2b3546" stroke="#8a8f98"/><text x="19" y="24" text-anchor="middle" fill="#fff" font-size="12">1</text></svg>
    <div class="edge border-start border-secondary"></div>
  </div>
</footer>
<div class="tip" role="tooltip">Windows Ink Workspace</div>
</body>
</html>
